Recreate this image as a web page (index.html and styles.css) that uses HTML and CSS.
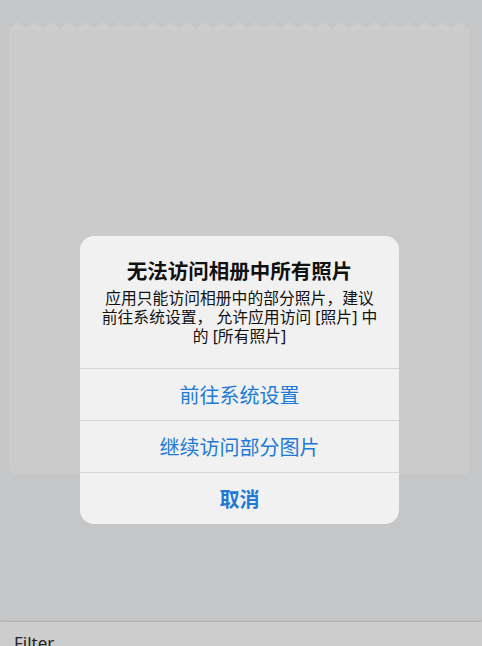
FILE: index.html
```html
<!DOCTYPE html>
<html lang="zh-CN">
<head>
    <meta charset="UTF-8">
    <meta name="viewport" content="width=device-width, initial-scale=1.0">
    <title>照片权限</title>
    <link rel="stylesheet" href="styles.css">
</head>
<body>
    <div class="page">
        <div class="card">
            <svg class="wave" viewBox="0 0 461 8" preserveAspectRatio="none">
                <defs>
                    <pattern id="zig" width="17" height="8" patternUnits="userSpaceOnUse" x="0">
                        <path d="M0 7 L7 1 Q8.5 0 10 1 L17 7 V8 H0 Z" fill="#cdcdcd"/>
                    </pattern>
                </defs>
                <rect width="461" height="8" fill="url(#zig)"/>
            </svg>
            <div class="card-body"></div>
        </div>

        <footer class="filter-bar">
            <span>Filter</span>
        </footer>

        <!-- alerta por cima do conteúdo -->
        <div class="alert">
            <div class="alert-head">
                <h2 class="alert-title">无法访问相册中所有照片</h2>
                <p class="alert-msg">应用只能访问相册中的部分照片，建议前往系统设置， 允许应用访问 [照片] 中的 [所有照片]</p>
            </div>
            <button class="alert-btn">前往系统设置</button>
            <button class="alert-btn">继续访问部分图片</button>
            <button class="alert-btn alert-btn-bold">取消</button>
        </div>
    </div>
</body>
</html>
```

FILE: styles.css
```css
body {
    margin: 0;
    padding: 0;
    background-color: #c5c6c8;
    font-family: 'Noto Sans', 'Noto Sans CJK SC', sans-serif;
    color: #111;
}

.page {
    position: relative;
    height: 646px;
    overflow: hidden;
    display: flex;
    flex-direction: column;
}

.card {
    margin: 22px 12px 0 9px;
    display: flex;
    flex-direction: column;
}

.wave {
    display: block;
    width: 100%;
    height: 8px;
}

.card-body {
    height: 444px;
    background-color: #cbcbcb;
    border-radius: 0 0 6px 6px;
}

.filter-bar {
    margin-top: auto;
    height: 24px;
    background-color: #cdcdcd;
    box-shadow: 0 -1px 2px rgba(0,0,0,0.12);
    padding: 10px 0 0 14px;
    box-sizing: border-box;
}

.filter-bar span {
    font-family: 'Noto Sans', sans-serif;
    font-size: 17px;
    line-height: 20px;
    color: #222;
}

.alert {
    position: absolute;
    left: 80px;
    top: 236px;
    width: 319px;
    background-color: #f1f1f1;
    border-radius: 14px;
    overflow: hidden;
    display: flex;
    flex-direction: column;
}

.alert-head {
    padding: 22px 20px 22px;
    text-align: center;
}

.alert-title {
    margin: 0;
    font-size: 20.5px;
    line-height: 26px;
    font-weight: bold;
}

.alert-msg {
    margin: 5px 0 0;
    font-size: 15.8px;
    line-height: 19px;
}

.alert-btn {
    height: 52px;
    box-sizing: border-box;
    border: 0;
    border-top: 1px solid #d6d6d8;
    background: transparent;
    font-family: 'Noto Sans CJK SC', sans-serif;
    font-size: 20px;
    color: #1d7ad6;
    padding: 0;
}

.alert-btn-bold {
    font-weight: bold;
}
```
